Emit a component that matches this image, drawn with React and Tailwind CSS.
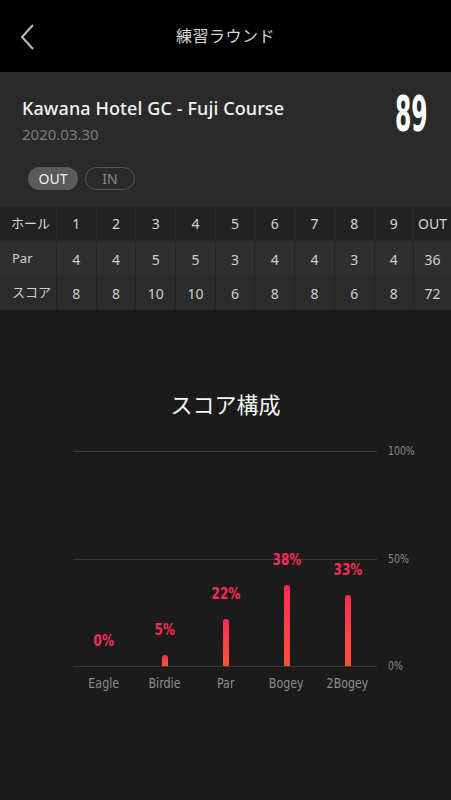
import React from "react";

const holes = [1, 2, 3, 4, 5, 6, 7, 8, 9];
const par = [4, 4, 5, 5, 3, 4, 4, 3, 4];
const score = [8, 8, 10, 10, 6, 8, 8, 6, 8];

const bars = [
  { label: "Eagle", pct: 0 },
  { label: "Birdie", pct: 5 },
  { label: "Par", pct: 22 },
  { label: "Bogey", pct: 38 },
  { label: "2Bogey", pct: 33 },
];

const cond = { fontFamily: '"DejaVu Sans",sans-serif' };

function Row({ label, values, total, bg }) {
  return (
    <div className={`flex h-[34px] ${bg}`}>
      <div className="w-[57px] flex items-center pl-[12px] text-[13px] text-[#cfcfcf] border-r border-[#242424]">{label}</div>
      {values.map((v, i) => (
        <div key={i} className="w-[39.7px] flex items-center justify-center text-[14px] text-[#cfcfcf] border-r border-[#242424]">
          {v}
        </div>
      ))}
      <div className="flex-1 flex items-center justify-center text-[14px] text-[#cfcfcf]">{total}</div>
    </div>
  );
}

export default function App() {
  return (
    <div className="w-[451px] h-[800px] bg-[#1b1b1b] overflow-hidden" style={{ fontFamily: '"Noto Sans","Noto Sans CJK JP",sans-serif' }}>
      {/* header */}
      <div className="h-[72px] bg-black flex items-center relative">
        <svg className="absolute left-[18px] top-[23px]" width="18" height="28" viewBox="0 0 18 28">
          <path d="M15 2 L4 14 L15 26" fill="none" stroke="#bdbdbd" strokeWidth="2" />
        </svg>
        <div className="w-full text-center text-[16px] text-[#d6d6d6] tracking-[0.5px]">練習ラウンド</div>
      </div>

      {/* card */}
      <div className="bg-[#2a2a2a] pt-[23px] pb-[2px]">
        <div className="flex justify-between px-[22px]">
          <div>
            <div className="text-[18px] leading-[26px] text-[#f2f2f2] font-medium tracking-[0.1px]">Kawana Hotel GC - Fuji Course</div>
            <div className="text-[15px] leading-[22px] text-[#7a7a7a] mt-[2px]">2020.03.30</div>
          </div>
          <div className="w-[40px] h-[44px] flex items-center justify-end mt-[-3px] mr-[1px]">
            <span
              className="inline-block text-[50px] leading-[50px] font-bold text-white"
              style={{ ...cond, transform: "scaleX(0.47)", transformOrigin: "right center" }}
            >
              89
            </span>
          </div>
        </div>
        <div className="flex gap-[7px] pl-[28px] mt-[22px] mb-[17px]">
          <div className="w-[50px] h-[23px] rounded-full bg-[#5a5a5a] text-[#f0f0f0] text-[14px] flex items-center justify-center">OUT</div>
          <div className="w-[50px] h-[23px] rounded-full border border-[#585858] text-[#8a8a8a] text-[14px] flex items-center justify-center">IN</div>
        </div>
        <div className="flex h-[33px] bg-[#222222]">
          <div className="w-[57px] flex items-center pl-[11px] text-[13px] text-[#d6d6d6] border-r border-[#2c2c2c]">ホール</div>
          {holes.map((h) => (
            <div key={h} className="w-[39.7px] flex items-center justify-center text-[14px] text-[#d6d6d6] border-r border-[#2c2c2c]">
              {h}
            </div>
          ))}
          <div className="flex-1 flex items-center justify-center text-[14px] text-[#d6d6d6]">OUT</div>
        </div>
      </div>
      <Row label="Par" values={par} total={36} bg="bg-[#2f2f2f]" />
      <Row label="スコア" values={score} total={72} bg="bg-[#2b2b2b]" />

      {/* chart section */}
      <div className="pt-[78px]">
        <div className="text-center text-[22px] leading-[32px] text-[#f5f5f5]">スコア構成</div>
        <div className="relative h-[260px] mt-[18px]">
          {/* grid lines */}
          {[
            { y: 13, t: "100%" },
            { y: 121, t: "50%" },
            { y: 228, t: "0%" },
          ].map((g) => (
            <div key={g.t} className="absolute left-[73px] h-0 flex items-center" style={{ top: g.y }}>
              <div className="w-[304px] h-[1px] bg-[#383838]" />
              <div className="ml-[11px] w-[40px] flex items-center">
                <span className="inline-block text-[13px] leading-[16px] text-[#8a8a8a]" style={{ ...cond, transform: "scaleX(0.72)", transformOrigin: "left center" }}>
                  {g.t}
                </span>
              </div>
            </div>
          ))}
          {/* bars */}
          <div className="absolute left-[73px] top-0 w-[305px] h-[228px] flex">
            {bars.map((b) => {
              const h = (b.pct / 100) * 214;
              return (
                <div key={b.label} className="flex-1 flex flex-col items-center justify-end">
                  <span
                    className="inline-block text-[15px] font-bold text-[#ff2c55] leading-[18px] mb-[16px]"
                    style={{ ...cond, transform: "scaleX(0.8)" }}
                  >
                    {b.pct}%
                  </span>
                  {h > 0 && (
                    <div
                      className="w-[6px] rounded-t-[3px] bg-gradient-to-b from-[#ff2658] to-[#ff5234]"
                      style={{ height: h }}
                    />
                  )}
                </div>
              );
            })}
          </div>
          <div className="absolute left-[73px] top-[236px] w-[305px] flex">
            {bars.map((b) => (
              <div key={b.label} className="flex-1 flex justify-center">
                <span className="inline-block text-[13.5px] leading-[18px] text-[#8c8c8c]" style={{ ...cond, transform: "scaleX(0.82)" }}>
                  {b.label}
                </span>
              </div>
            ))}
          </div>
        </div>
      </div>
    </div>
  );
}
